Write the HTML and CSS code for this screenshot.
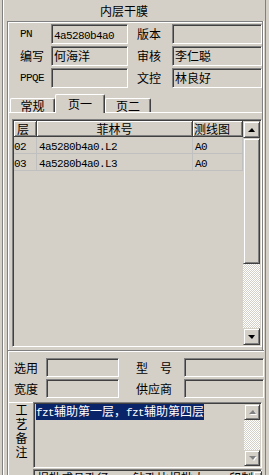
FILE: index.html
```html
<!DOCTYPE html>
<html>
<head>
<meta charset="utf-8">
<title>内层干膜</title>
<link rel="stylesheet" href="styles.css">
</head>
<body>
<div class="win">
<div class="frame">

  <!-- Title -->
  <div class="title">内层干膜</div>

  <!-- Top group: header fields + tabs -->
  <div class="group">
    <div class="fields">
      <span class="lab en">PN</span>
      <div class="box"><span class="en">4a5280b4a0</span></div>
      <span class="lab lab2">版本</span>
      <div class="box"></div>

      <span class="lab">编写</span>
      <div class="box">何海洋</div>
      <span class="lab lab2">审核</span>
      <div class="box">李仁聪</div>

      <span class="lab en">PPQE</span>
      <div class="box"></div>
      <span class="lab lab2">文控</span>
      <div class="box">林良好</div>
    </div>

    <div class="tabs">
      <div class="tab">常规</div>
      <div class="tab on">页一</div>
      <div class="tab last">页二</div>
    </div>

    <div class="panel">
      <div class="list">
        <div class="grid">
          <div class="hd">
            <div class="c c1">层</div>
            <div class="c c2 mid">菲林号</div>
            <div class="c c3">测线图</div>
          </div>
          <div class="row">
            <div class="c c1"><span class="en">02</span></div>
            <div class="c c2"><span class="en">4a5280b4a0.L2</span></div>
            <div class="c c3"><span class="en">A0</span></div>
          </div>
          <div class="row">
            <div class="c c1"><span class="en">03</span></div>
            <div class="c c2"><span class="en">4a5280b4a0.L3</span></div>
            <div class="c c3"><span class="en">A0</span></div>
          </div>
        </div>
        <div class="sb">
          <div class="btn"><i class="up"></i></div>
          <div class="btn thumb"></div>
          <div class="track"></div>
          <div class="btn"><i class="dn"></i></div>
        </div>
      </div>
    </div>
  </div>

  <!-- Lower group -->
  <div class="lower">
    <div class="fields2">
      <span class="lab">选用</span>
      <div class="box"></div>
      <span class="lab lab3">型　号</span>
      <div class="box"></div>

      <span class="lab">宽度</span>
      <div class="box"></div>
      <span class="lab lab3">供应商</span>
      <div class="box"></div>
    </div>

    <div class="memo">
      <div class="vtab">工艺备注</div>
      <div class="memo-box">
        <div class="txt"><span class="sel"><span class="en">fzt</span>辅助第一层，<span class="en">fzt</span>辅助第四层</span></div>
        <div class="sb sb2">
          <div class="btn"><i class="up off"></i></div>
          <div class="track"></div>
          <div class="btn"><i class="dn off"></i></div>
        </div>
      </div>
    </div>

    <div class="note">
      <div class="txt">报批成品孔径<span class="en">(mm)</span>钻孔比报批大<span class="en">(mm)</span>印制</div>
      <div class="sb sb2">
        <div class="btn"><i class="up off"></i></div>
      </div>
    </div>
  </div>

</div>
</div>
</body>
</html>
```

FILE: styles.css
```css
* {box-sizing: border-box;}

body {
  margin: 0;
  background: #d4d0c8;
  color: #000;
  font: 12px "Noto Sans CJK SC", sans-serif;
}

.en {
  font-family: "Liberation Mono", monospace;
  font-size: 11px;
  letter-spacing: -0.6px;
}

.win {
  width: 269px;
  height: 475px;
  overflow: hidden;
  padding-left: 2px;
}

.frame {
  width: 264px;
  height: 100%;
  border-left: 1px solid #808080;
  border-right: 1px solid #808080;
  box-shadow: inset 1px 0 #fff;
}

.title {
  height: 21px;
  line-height: 21px;
  padding-left: 97px;
}

/* etched group boxes */
.group {
  margin-left: 4px;
  width: 256px;
  height: 329px;
  border-top: 1px solid #808080;
  border-left: 1px solid #808080;
  border-right: 1px solid #808080;
  box-shadow: inset 1px 1px #fff, 1px 0 #fff;
  padding-top: 2px;
}

.fields {
  display: grid;
  grid-template-columns: 31px 77px 44px 90px;
  grid-auto-rows: 20px;
  row-gap: 2px;
  padding-left: 12px;
}

.lab {
  line-height: 20px;
  white-space: nowrap;
}
.lab2 {padding-left: 9px;}

/* sunken edit box */
.box {
  border: 1px solid;
  border-color: #808080 #fff #fff #808080;
  box-shadow: inset 1px 1px #404040, inset -1px -1px #d4d0c8;
  padding-left: 2px;
  line-height: 18px;
  white-space: nowrap;
}

/* tabs */
.tabs {
  display: flex;
  align-items: flex-end;
  height: 18px;
  margin-top: 6px;
  padding-left: 2px;
}

.tab {
  width: 45px;
  height: 14px;
  line-height: 14px;
  text-align: center;
  border-top: 1px solid #fff;
  border-left: 1px solid #fff;
  border-right: 1px solid #404040;
  box-shadow: inset -1px 0 #808080;
  border-radius: 2px 2px 0 0;
}
.tab.on {
  width: 50px;
  height: 19px;
  line-height: 17px;
  margin-bottom: -1px;
  background: #d4d0c8;
  position: relative;
  z-index: 1;
}
.tab.last {width: 46px;}

.panel {
  border-top: 1px solid #fff;
  padding: 6px 0 0 4px;
}

/* list view */
.list {
  display: flex;
  width: 250px;
  height: 228px;
  padding: 1px;
  border: 1px solid;
  border-color: #808080 #fff #fff #808080;
  box-shadow: inset 1px 1px #404040, inset -1px -1px #d4d0c8;
}

.grid {flex: 1;}

.hd, .row {display: flex;}

.c {white-space: nowrap;}
.c1 {width: 23px;}
.c2 {width: 156px;}
.c3 {width: 50px;}
.mid {text-align: center;}

.hd .c {
  height: 16px;
  line-height: 15px;
  border-right: 1px solid #404040;
  border-bottom: 1px solid #404040;
  box-shadow: inset 1px 1px #fff, inset -1px -1px #808080;
}
.hd .c1 {padding-left: 3px;}
.hd .c3 {padding-left: 1px;}

.row .c {
  height: 17px;
  line-height: 16px;
  padding-left: 2px;
  border-right: 1px solid #c0c0c0;
  border-bottom: 1px solid #c0c0c0;
}
.row .c1 {padding-left: 0;}

/* scroll bars */
.sb {
  display: flex;
  flex-direction: column;
  width: 17px;
}

.btn {
  height: 17px;
  display: flex;
  align-items: center;
  justify-content: center;
  background: #d4d0c8;
  border: 1px solid;
  border-color: #d4d0c8 #404040 #404040 #d4d0c8;
  box-shadow: inset 1px 1px #fff, inset -1px -1px #808080;
}
.thumb {height: 126px;}

.track {
  flex: 1;
  background: repeating-conic-gradient(#fff 0 25%, #d4d0c8 0 50%) 0 0 / 2px 2px;
}

.up, .dn {
  width: 0;
  height: 0;
  border-left: 4px solid transparent;
  border-right: 3px solid transparent;
}
.up {border-bottom: 4px solid #000;}
.dn {border-top: 4px solid #000;}
.up.off {border-bottom-color: #808080; filter: drop-shadow(1px 1px 0 #fff);}
.dn.off {border-top-color: #808080; filter: drop-shadow(1px 1px 0 #fff);}

/* lower group */
.lower {
  margin-left: 4px;
  width: 257px;
  height: 125px;
  border-top: 1px solid #808080;
  border-left: 1px solid #808080;
  box-shadow: inset 1px 1px #fff;
  padding-top: 7px;
}

.fields2 {
  display: grid;
  grid-template-columns: 32px 73px 65px 80px;
  grid-auto-rows: 19px;
  row-gap: 2px;
  padding-left: 6px;
}
.fields2 .lab {line-height: 19px;}
.lab3 {padding-left: 17px;}

.memo {
  display: flex;
  height: 66px;
  margin-top: 4px;
}

.vtab {
  width: 25px;
  border-top: 1px solid #fff;
  border-left: 1px solid #fff;
  writing-mode: vertical-rl;
  text-orientation: upright;
  letter-spacing: 2px;
  line-height: 23px;
  padding-top: 1px;
}

.memo-box, .note {
  display: flex;
  width: 229px;
  padding: 1px;
  border: 1px solid;
  border-color: #808080 #fff #fff #808080;
  box-shadow: inset 1px 1px #404040, inset -1px -1px #d4d0c8;
}

.txt {
  flex: 1;
  padding: 0 0 0 1px;
  line-height: 14px;
  white-space: nowrap;
}

.sel {
  display: inline-block;
  background: #0a246a;
  color: #fff;
}

.sb2 {width: 16px;}
.sb2 .btn {height: 16px;}

.note {
  height: 30px;
  margin: 1px 0 0 25px;
}
.note .txt {padding-left: 2px;}
```
